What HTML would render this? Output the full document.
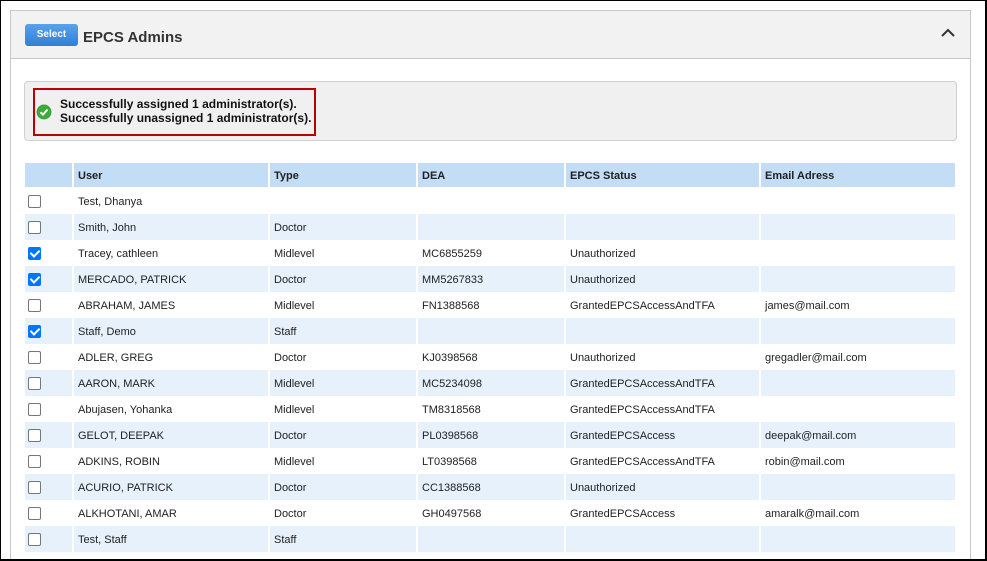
<!DOCTYPE html>
<html style="overflow:hidden"><head><style>
*{box-sizing:border-box;margin:0;padding:0}
html,body{width:987px;height:561px;overflow:hidden}
body{background:#fff;font-family:"Liberation Sans",Arial,sans-serif;position:relative}
.frame{position:absolute;left:0;top:0;width:987px;height:561px;border:1px solid #000;border-right-width:2px;border-bottom-width:2px}
.panel{position:absolute;left:10px;top:10px;width:961px;height:560px;border:1px solid #c8c8c8;overflow:hidden}
.hdr{height:48px;background:#f2f2f2;border-bottom:1px solid #c8c8c8;position:relative}
.btn{position:absolute;left:14px;top:13px;width:53px;height:22px;border-radius:3px;background:linear-gradient(#5aa2ea,#2f7fd6);color:#fff;font-size:10px;font-weight:bold;text-align:center;line-height:22px}
.title{position:absolute;left:72px;top:18px;font-size:15px;font-weight:bold;color:#333}
.chev{position:absolute;right:14px;top:16px}
.msg{position:absolute;left:13px;top:70px;width:933px;height:60px;background:#f0f0f0;border:1px solid #d0d0d0;border-radius:4px}
.red{position:absolute;left:8px;top:6px;width:283px;height:48px;border:2px solid #b00;}
.red .ic{position:absolute;left:1px;top:14px}
.red .t{position:absolute;left:25px;top:7px;font-size:12px;font-weight:bold;line-height:14px;color:#111}
table{position:absolute;left:12px;top:152px;border-collapse:separate;border-spacing:2px 0}
td,th{height:26px;font-size:11px;color:#222;padding-left:4px;padding-top:1px;text-align:left}
th{height:25px;background:#c2ddf5;font-weight:bold;padding-top:1px;border-bottom:1px solid #fff}
tr:nth-child(odd) td{background:#e6f1fc}
td:first-child,th:first-child{padding-left:3px;padding-top:0}
.cb{display:inline-block;width:13px;height:13px;border:1px solid #767676;border-radius:2px;background:#fff;vertical-align:middle}
.cb.on{background:#0075ff;border-color:#0075ff;position:relative}
.cb.on:after{content:"";position:absolute;left:3px;top:0px;width:4px;height:7px;border:solid #fff;border-width:0 2px 2px 0;transform:rotate(45deg)}
</style></head><body>
<div class="panel">
 <div class="hdr"><div class="btn">Select</div><div class="title">EPCS Admins</div>
 <svg class="chev" width="16" height="12" viewBox="0 0 16 12"><path d="M2 9 L8 3 L14 9" stroke="#333" stroke-width="2" fill="none"/></svg></div>
 <div class="msg"><div class="red">
  <svg class="ic" width="16" height="16" viewBox="0 0 16 16"><circle cx="8" cy="8" r="7.5" fill="#3ea83a"/><path d="M4.5 8.3 L7 10.6 L11.5 5.5" stroke="#fff" stroke-width="2" fill="none"/></svg>
  <div class="t">Successfully assigned 1 administrator(s).<br>Successfully unassigned 1 administrator(s).</div>
 </div></div>
 <table>
 <tr><th style="width:47px"></th><th style="width:194px">User</th><th style="width:146px">Type</th><th style="width:146px">DEA</th><th style="width:193px">EPCS Status</th><th style="width:194px">Email Adress</th></tr>
 <tr><td><span class="cb"></span></td><td>Test, Dhanya</td><td></td><td></td><td></td><td></td></tr>
 <tr><td><span class="cb"></span></td><td>Smith, John</td><td>Doctor</td><td></td><td></td><td></td></tr>
 <tr><td><span class="cb on"></span></td><td>Tracey, cathleen</td><td>Midlevel</td><td>MC6855259</td><td>Unauthorized</td><td></td></tr>
 <tr><td><span class="cb on"></span></td><td>MERCADO, PATRICK</td><td>Doctor</td><td>MM5267833</td><td>Unauthorized</td><td></td></tr>
 <tr><td><span class="cb"></span></td><td>ABRAHAM, JAMES</td><td>Midlevel</td><td>FN1388568</td><td>GrantedEPCSAccessAndTFA</td><td>james@mail.com</td></tr>
 <tr><td><span class="cb on"></span></td><td>Staff, Demo</td><td>Staff</td><td></td><td></td><td></td></tr>
 <tr><td><span class="cb"></span></td><td>ADLER, GREG</td><td>Doctor</td><td>KJ0398568</td><td>Unauthorized</td><td>gregadler@mail.com</td></tr>
 <tr><td><span class="cb"></span></td><td>AARON, MARK</td><td>Midlevel</td><td>MC5234098</td><td>GrantedEPCSAccessAndTFA</td><td></td></tr>
 <tr><td><span class="cb"></span></td><td>Abujasen, Yohanka</td><td>Midlevel</td><td>TM8318568</td><td>GrantedEPCSAccessAndTFA</td><td></td></tr>
 <tr><td><span class="cb"></span></td><td>GELOT, DEEPAK</td><td>Doctor</td><td>PL0398568</td><td>GrantedEPCSAccess</td><td>deepak@mail.com</td></tr>
 <tr><td><span class="cb"></span></td><td>ADKINS, ROBIN</td><td>Midlevel</td><td>LT0398568</td><td>GrantedEPCSAccessAndTFA</td><td>robin@mail.com</td></tr>
 <tr><td><span class="cb"></span></td><td>ACURIO, PATRICK</td><td>Doctor</td><td>CC1388568</td><td>Unauthorized</td><td></td></tr>
 <tr><td><span class="cb"></span></td><td>ALKHOTANI, AMAR</td><td>Doctor</td><td>GH0497568</td><td>GrantedEPCSAccess</td><td>amaralk@mail.com</td></tr>
 <tr><td><span class="cb"></span></td><td>Test, Staff</td><td>Staff</td><td></td><td></td><td></td></tr>
 <tr><td><span class="cb on"></span></td><td></td><td></td><td></td><td></td><td></td></tr>
 </table>
</div>
<div class="frame"></div>
</body></html>
